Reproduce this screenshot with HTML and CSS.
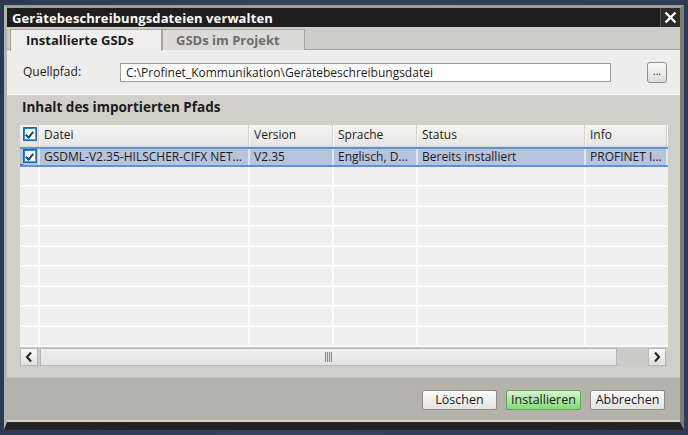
FILE: index.html
```html
<!DOCTYPE html>
<html lang="de">
<head>
    <meta charset="UTF-8">
    <title>Gerätebeschreibungsdateien verwalten</title>
    <link rel="stylesheet" href="styles.css">
</head>
<body>
    <div class="dialog">
        <div class="titlebar">
            <span class="title">Gerätebeschreibungsdateien verwalten</span>
            <span class="close">
                <svg width="13" height="13" viewBox="0 0 13 13"><path d="M1.5 1.5 L11.5 11.5 M11.5 1.5 L1.5 11.5" stroke="#fff" stroke-width="2.4"/></svg>
            </span>
        </div>

        <div class="tabs">
            <div class="tab active">Installierte GSDs</div>
            <div class="tab">GSDs im Projekt</div>
        </div>

        <div class="source">
            <span class="source-label">Quellpfad:</span>
            <div class="path">C:\Profinet_Kommunikation\Gerätebeschreibungsdatei</div>
            <div class="browse">...</div>
        </div>

        <div class="content">
            <div class="section-title">Inhalt des importierten Pfads</div>
            <div class="grid">
                <div class="row header">
                    <div class="cell cb"><span class="check"></span></div>
                    <div class="cell">Datei</div>
                    <div class="cell">Version</div>
                    <div class="cell">Sprache</div>
                    <div class="cell">Status</div>
                    <div class="cell">Info</div>
                </div>
                <div class="row selected">
                    <div class="cell cb"><span class="check"></span><span class="focus-dot"></span></div>
                    <div class="cell">GSDML-V2.35-HILSCHER-CIFX NET...</div>
                    <div class="cell">V2.35</div>
                    <div class="cell">Englisch, D...</div>
                    <div class="cell">Bereits installiert</div>
                    <div class="cell">PROFINET I...</div>
                </div>
                <div class="row empty"><div class="cell cb"></div><div class="cell"></div><div class="cell"></div><div class="cell"></div><div class="cell"></div><div class="cell"></div></div>
                <div class="row empty"><div class="cell cb"></div><div class="cell"></div><div class="cell"></div><div class="cell"></div><div class="cell"></div><div class="cell"></div></div>
                <div class="row empty"><div class="cell cb"></div><div class="cell"></div><div class="cell"></div><div class="cell"></div><div class="cell"></div><div class="cell"></div></div>
                <div class="row empty"><div class="cell cb"></div><div class="cell"></div><div class="cell"></div><div class="cell"></div><div class="cell"></div><div class="cell"></div></div>
                <div class="row empty"><div class="cell cb"></div><div class="cell"></div><div class="cell"></div><div class="cell"></div><div class="cell"></div><div class="cell"></div></div>
                <div class="row empty"><div class="cell cb"></div><div class="cell"></div><div class="cell"></div><div class="cell"></div><div class="cell"></div><div class="cell"></div></div>
                <div class="row empty"><div class="cell cb"></div><div class="cell"></div><div class="cell"></div><div class="cell"></div><div class="cell"></div><div class="cell"></div></div>
                <div class="row empty"><div class="cell cb"></div><div class="cell"></div><div class="cell"></div><div class="cell"></div><div class="cell"></div><div class="cell"></div></div>
                <div class="row empty"><div class="cell cb"></div><div class="cell"></div><div class="cell"></div><div class="cell"></div><div class="cell"></div><div class="cell"></div></div>

                <div class="hscroll">
                    <div class="scroll-btn">
                        <svg width="10" height="12" viewBox="0 0 10 12"><path d="M7 1.5 L3 6 L7 10.5" fill="none" stroke="#2a2a2a" stroke-width="2.2"/></svg>
                    </div>
                    <div class="thumb"><span class="grip"></span></div>
                    <div class="scroll-gap"></div>
                    <div class="scroll-btn">
                        <svg width="10" height="12" viewBox="0 0 10 12"><path d="M3 1.5 L7 6 L3 10.5" fill="none" stroke="#2a2a2a" stroke-width="2.2"/></svg>
                    </div>
                </div>
            </div>
        </div>

        <div class="footer">
            <div class="btn">Löschen</div>
            <div class="btn primary">Installieren</div>
            <div class="btn">Abbrechen</div>
        </div>
    </div>
</body>
</html>
```

FILE: styles.css
```css
body {
    margin: 0;
    padding: 5px 4px;
    background: linear-gradient(90deg, #2b3a52, #34445e 40%, #2d3c55);
    font-family: "Open Sans", "DejaVu Sans", sans-serif;
    font-size: 12px;
    color: #1b1b1b;
}
.dialog {
    width: 680px;
    box-sizing: border-box;
    border-left: 3px solid #b4b3af;
    border-right: 4px solid #7d7c79;
    border-top: 3px solid #9e9d99;
    border-bottom: 8px solid #222;
    background: #d2cfc8;
}
.titlebar {
    display: flex;
    justify-content: space-between;
    align-items: center;
    height: 19px;
    background: #1e1e1e;
    color: #fff;
}
.title {
    padding-left: 5px;
    font-weight: bold;
    font-size: 13px;
    letter-spacing: 0.1px;
}
.close {
    width: 19px;
    height: 19px;
    display: flex;
    align-items: center;
    justify-content: center;
    background: #2b2b2b;
    border-left: 1px solid #555;
}
.tabs {
    display: flex;
    height: 23px;
    padding: 2px 0 0 3px;
    box-sizing: border-box;
    background: #cfccc5;
    border-bottom: 1px solid #a5a4a0;
}
.tab {
    height: 21px;
    line-height: 21px;
    padding: 0 13px;
    width: 143px;
    box-sizing: border-box;
    background: #dcdad5;
    border: 1px solid #a5a4a0;
    border-bottom: none;
    color: #6c6c6c;
    font-weight: bold;
    font-size: 13px;
}
.tab.active {
    width: 152px;
    padding-left: 15px;
    height: 22px;
    background: #efeeec;
    color: #1b1b1b;
    position: relative;
    z-index: 1;
}
.source {
    display: flex;
    align-items: center;
    height: 44px;
    padding-left: 16px;
    background: #eeedeb;
    border-bottom: 1px solid #f8f8f7;
}
.source-label {
    width: 97px;
    margin-bottom: 2px;
}
.path {
    width: 491px;
    height: 19px;
    line-height: 18px;
    box-sizing: border-box;
    padding-left: 5px;
    background: #fff;
    border: 1px solid #9d9c99;
}
.browse {
    margin-left: 36px;
    width: 20px;
    height: 21px;
    line-height: 16px;
    box-sizing: border-box;
    text-align: center;
    border: 1px solid #8f8e8b;
    border-radius: 3px;
    background: linear-gradient(#fbfbfa, #dcdbd8);
    font-size: 10px;
}
.content {
    padding: 0 12px 10px 13px;
    background: #d2cfc8;
}
.section-title {
    height: 30px;
    line-height: 25px;
    padding-left: 2px;
    font-weight: bold;
    font-size: 13.5px;
}
.grid {
    width: 648px;
    background: #f0efed;
}
.row {
    display: grid;
    grid-template-columns: 20px 210px 84px 84px 168px 82px;
    height: 20px;
}
.cell {
    box-sizing: border-box;
    padding-left: 4px;
    line-height: 19px;
    white-space: nowrap;
    overflow: hidden;
    border-right: 2px solid #fbfbfa;
}
.cell:last-child {
    border-right: none;
}
.row.header {
    height: 21px;
    background: linear-gradient(#f5f5f3, #e6e5e2);
    border-bottom: 1px solid #d8d7d3;
}
.row.header .cell {
    border-right: 1px solid #fbfbfa;
    box-shadow: inset -1px 0 0 #d4d3cf;
}
.row.selected {
    background: #b5c3dc;
    border-top: 2px solid #5e93d6;
    border-bottom: 2px solid #5e93d6;
    height: 20px;
    box-sizing: border-box;
}
.row.selected .cell {
    line-height: 15px;
    border-right: 2px solid #dfe6f1;
}
.row.empty {
    border-bottom: 2px solid #fbfbfa;
    box-sizing: border-box;
}
.cb {
    position: relative;
    padding-left: 3px;
}
.check {
    display: inline-block;
    width: 14px;
    height: 14px;
    margin-top: 2px;
    box-sizing: border-box;
    border: 1px solid #2f5f96;
    background: linear-gradient(135deg, #1b74c9, #33c3e6);
    position: relative;
    vertical-align: top;
}
.selected .check {
    margin-top: 0;
}
.check::after {
    content: "";
    position: absolute;
    left: 1px;
    top: 1px;
    width: 10px;
    height: 10px;
    background: #fff;
}
.check::before {
    content: "";
    position: absolute;
    left: 3px;
    top: 2px;
    width: 3px;
    height: 6px;
    border: solid #1c3e6e;
    border-width: 0 2px 2px 0;
    transform: rotate(40deg);
    z-index: 1;
}
.focus-dot {
    position: absolute;
    left: 0;
    bottom: -2px;
    width: 3px;
    height: 3px;
    background: #2b6fd0;
}
.hscroll {
    display: flex;
    align-items: center;
    height: 20px;
    background: #cdcbc5;
}
.scroll-btn {
    width: 18px;
    height: 18px;
    box-sizing: border-box;
    display: flex;
    align-items: center;
    justify-content: center;
    background: linear-gradient(#f8f8f7, #e2e1de);
    border: 1px solid #b7b6b2;
}
.thumb {
    margin-left: 2px;
    width: 577px;
    height: 18px;
    box-sizing: border-box;
    display: flex;
    align-items: center;
    justify-content: center;
    background: linear-gradient(#f1f0ee, #e4e3e0);
    border: 1px solid #b7b6b2;
}
.grip {
    width: 7px;
    height: 10px;
    background: repeating-linear-gradient(90deg, #8e8d8a 0 1px, #dcdbd8 1px 2px);
}
.scroll-gap {
    width: 31px;
}
.footer {
    display: flex;
    justify-content: flex-end;
    gap: 9px;
    height: 45px;
    padding: 12px 15px 0 0;
    box-sizing: border-box;
    background: #b5b2ab;
    border-top: 1px solid #c5c2bc;
    border-bottom: 2px solid #d6d4cf;
}
.btn {
    width: 75px;
    height: 20px;
    line-height: 18px;
    box-sizing: border-box;
    text-align: center;
    border: 1px solid #8e8d89;
    border-radius: 2px;
    background: linear-gradient(#fdfdfd, #e2e1de);
    font-size: 12.5px;
}
.btn.primary {
    background: linear-gradient(#d6f5cf, #84da77);
    border-color: #62a55a;
}
```
